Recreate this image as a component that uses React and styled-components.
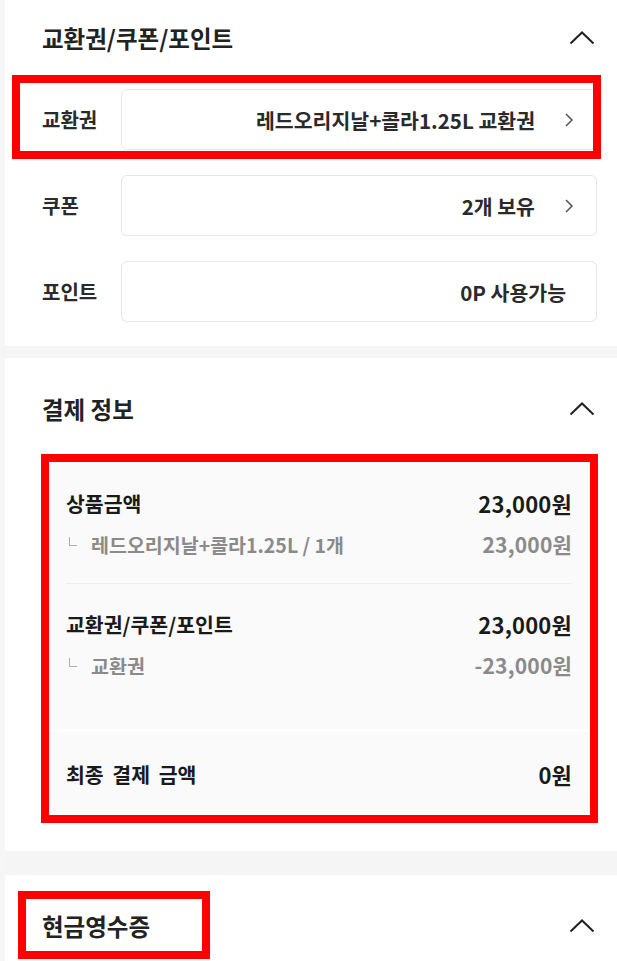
import React from "react";
import styled, { createGlobalStyle } from "styled-components";

const GlobalStyle = createGlobalStyle`
  html, body { margin: 0; padding: 0; background: #f6f6f6; }
  body {
    font-family: "Noto Sans CJK KR", "Noto Sans", sans-serif;
    color: #222;
    -webkit-font-smoothing: antialiased;
  }
`;

const Page = styled.div`
  margin-left: 5px;
  width: 612px;
  background: #fff;
  overflow: hidden;
  height: 961px;
`;

const Section = styled.section`
  background: #fff;
  padding: ${(p) => p.$pt}px 20px ${(p) => p.$pb}px 37px;
`;

const Spacer = styled.div`
  height: ${(p) => p.$h}px;
  background: #f5f5f5;
`;

const Header = styled.div`
  height: 76px;
  display: flex;
  align-items: center;
  justify-content: space-between;
`;

const Title = styled.h2`
  margin: 0;
  font-size: 23.5px;
  font-weight: 700;
  line-height: 30px;
  color: #222;
`;

const Marked = styled.div`
  position: relative;
  display: ${(p) => (p.$inline ? "inline-block" : "block")};
  &::after {
    content: "";
    position: absolute;
    top: ${(p) => p.$t}px;
    right: ${(p) => p.$r}px;
    bottom: ${(p) => p.$b}px;
    left: ${(p) => p.$l}px;
    border: 8px solid #ff0000;
    pointer-events: none;
  }
`;

const Toggle = styled.svg`
  width: 26px;
  height: 14px;
  margin-right: 2px;
  display: block;
`;

const ChevronUp = () => (
  <Toggle viewBox="0 0 26 14" fill="none">
    <polyline points="1.5,12.5 13,1.5 24.5,12.5" stroke="#222" strokeWidth="2" />
  </Toggle>
);

const Rows = styled.div`
  margin-top: 13px;
  display: flex;
  flex-direction: column;
  gap: 25px;
`;

const FieldRow = styled.div`
  display: flex;
  align-items: center;
`;

const FieldLabel = styled.div`
  width: 79px;
  flex: none;
  font-size: 20px;
  font-weight: 600;
  color: #2a2a2a;
`;

const FieldBox = styled.div`
  flex: 1;
  height: 61px;
  box-sizing: border-box;
  border: 1px solid #e6e6e6;
  border-radius: 6px;
  background: #fff;
  display: flex;
  align-items: center;
  justify-content: flex-end;
  padding: 0 ${(p) => (p.$arrow ? 22 : 30)}px 0 16px;
`;

const FieldValue = styled.span`
  font-size: 20.5px;
  font-weight: 600;
  color: #2a2a2a;
`;

const Arrow = styled.svg`
  width: 10px;
  height: 16px;
  margin-left: 29px;
  display: block;
`;

const ChevronRight = () => (
  <Arrow viewBox="0 0 10 16" fill="none">
    <polyline points="2,2 8,8 2,14" stroke="#555" strokeWidth="1.5" />
  </Arrow>
);

const Field = ({ label, value, arrow }) => (
  <FieldRow>
    <FieldLabel>{label}</FieldLabel>
    <FieldBox $arrow={arrow}>
      <FieldValue>{value}</FieldValue>
      {arrow && <ChevronRight />}
    </FieldBox>
  </FieldRow>
);

const SummaryBox = styled.div`
  margin-top: 8px;
  margin-right: 1px;
  background: #fafafa;
`;

const Group = styled.div`
  padding: ${(p) => p.$pt}px 24px ${(p) => p.$pb}px;
  display: flex;
  flex-direction: column;
  gap: 13px;
`;

const Divider = styled.div`
  height: 1px;
  margin: 0 24px;
  background: #eeeeee;
`;

const TotalBlock = styled.div`
  border-top: 3px solid #fff;
  padding: 28px 24px 34px;
`;

const Line = styled.div`
  display: flex;
  align-items: center;
  justify-content: space-between;
  height: 28px;
`;

const MainText = styled.span`
  font-size: 20.5px;
  font-weight: 700;
  color: #1a1a1a;
  word-spacing: 4px;
`;

const Amount = styled.span`
  font-size: 22px;
  font-weight: 700;
  color: #1a1a1a;
  letter-spacing: 0.2px;
`;

const SubText = styled.span`
  display: flex;
  align-items: center;
  font-size: 19.5px;
  font-weight: 600;
  color: #8a8a8a;
`;

const SubMark = styled.i`
  display: block;
  width: 7px;
  height: 8px;
  margin: 0 14px 6px 3px;
  border-left: 1.5px solid #b0b0b0;
  border-bottom: 1.5px solid #b0b0b0;
`;

const SubAmount = styled.span`
  font-size: 21px;
  font-weight: 600;
  color: #8a8a8a;
  letter-spacing: 0.2px;
`;

const MainLine = ({ label, amount }) => (
  <Line>
    <MainText>{label}</MainText>
    <Amount>{amount}</Amount>
  </Line>
);

const SubLine = ({ label, amount }) => (
  <Line>
    <SubText>
      <SubMark />
      {label}
    </SubText>
    <SubAmount>{amount}</SubAmount>
  </Line>
);

export default function App() {
  return (
    <>
      <GlobalStyle />
      <Page>
        <Section $pt={0} $pb={24}>
          <Header>
            <Title>교환권/쿠폰/포인트</Title>
            <ChevronUp />
          </Header>
          <Rows>
            <Marked $t={-14} $r={-4} $b={-9} $l={-30}>
              <Field label="교환권" value="레드오리지날+콜라1.25L 교환권" arrow />
            </Marked>
            <Field label="쿠폰" value="2개 보유" arrow />
            <Field label="포인트" value="0P 사용가능" />
          </Rows>
        </Section>
        <Spacer $h={12} />
        <Section $pt={13} $pb={29}>
          <Header>
            <Title>결제 정보</Title>
            <ChevronUp />
          </Header>
          <Marked $t={-1} $r={-1} $b={-1} $l={-1}>
            <SummaryBox>
              <Group $pt={34} $pb={25}>
                <MainLine label="상품금액" amount="23,000원" />
                <SubLine label="레드오리지날+콜라1.25L / 1개" amount="23,000원" />
              </Group>
              <Divider />
              <Group $pt={26} $pb={50}>
                <MainLine label="교환권/쿠폰/포인트" amount="23,000원" />
                <SubLine label="교환권" amount="-23,000원" />
              </Group>
              <TotalBlock>
                <MainLine label="최종 결제 금액" amount="0원" />
              </TotalBlock>
            </SummaryBox>
          </Marked>
        </Section>
        <Spacer $h={24} />
        <Section $pt={13} $pb={20}>
          <Header>
            <Marked $inline $t={-20} $r={-60} $b={-18} $l={-24}>
              <Title>현금영수증</Title>
            </Marked>
            <ChevronUp />
          </Header>
        </Section>
      </Page>
    </>
  );
}
